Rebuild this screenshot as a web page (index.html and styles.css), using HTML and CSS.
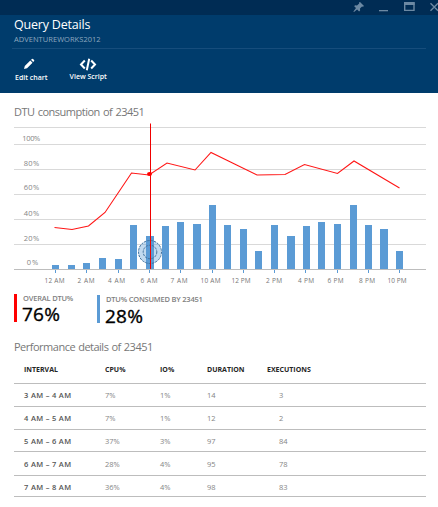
FILE: index.html
```html
<!DOCTYPE html>
<html lang="en">
<head>
<meta charset="utf-8">
<title>Query Details</title>
<link rel="stylesheet" href="styles.css">
</head>
<body>
<header class="blade-header">
  <div class="window-bar">
    <svg class="window-icons" width="88" height="15" viewBox="0 0 88 15">
      <path class="solid" d="M9 2l4 4-1 .8-1-.2-2 2 .1 2-1 .8-2-2L3 12l-.6-.5L5 8 3.2 6.200l.8-.9 2 .1 2.200-2-.2-.9z"/>
      <path class="solid" d="M28 10h9v1.300h-9z"/>
      <path class="stroke" d="M53.700 3v7.400h9.300V3z"/>
      <path class="solid" d="M53 2h10.600v3H53z"/>
      <path class="stroke" d="M79.500 3.300l7.500 7.400M87 3.300l-7.500 7.400"/>
    </svg>
  </div>
  <div class="heading">
    <h1>Query Details</h1>
    <p class="database">ADVENTUREWORKS2012</p>
  </div>
  <nav class="toolbar">
    <a class="tool edit">
      <svg width="12" height="12" viewBox="0 0 12 12"><path d="M1 11l.8-3L7.300 2.500l2.200 2.200L4 10.200zM8 1.800L9 .9q.5-.4 1 0l1.100 1.100q.4.500 0 1l-.9 1z"/></svg>
      <span>Edit chart</span>
    </a>
    <a class="tool script">
      <svg width="18" height="13" viewBox="0 0 18 13"><path class="code" d="M5.800 2.500L2 6.500l3.800 4M12.200 2.500l3.800 4-3.800 4M10.200.8L7.800 12.200"/></svg>
      <span>View Script</span>
    </a>
  </nav>
</header>
<main>
  <h2 class="chart-title">DTU consumption of 23451</h2>
  <svg class="chart" width="438" height="168" viewBox="0 121 438 168">
    <path class="grid" d="M14 127.500H426M14 144.500H426M14 169.500H426M14 194.500H426M14 219.500H426M14 244.500H426"/>
    <g class="axis-label">
      <text x="22.300" y="141" textLength="18">100%</text>
      <text x="23.700" y="166" textLength="15.500">80%</text>
      <text x="23.700" y="190" textLength="15.500">60%</text>
      <text x="23.700" y="216" textLength="15.500">40%</text>
      <text x="23.700" y="241" textLength="15.500">20%</text>
      <text x="26.700" y="265" textLength="11.500">0%</text>
    </g>
    <path class="bars" d="M52 265h7v4h-7zM68 265h7v4h-7zM83 263h7v6h-7zM99 258h7v11h-7zM115 259h7v10h-7zM130 225h7v44h-7zM146 236h8v33h-8zM162 226h7v43h-7zM177 222h7v47h-7zM193 224h8v45h-8zM209 205h7v64h-7zM224 225h7v44h-7zM240 229h7v40h-7zM255 251h7v18h-7zM271 225h7v44h-7zM287 236h8v33h-8zM303 226h7v43h-7zM318 222h7v47h-7zM334 224h7v45h-7zM350 205h7v64h-7zM365 225h7v44h-7zM380 229h8v40h-8zM396 251h7v18h-7z"/>
    <path class="axis" d="M14 269.500H426"/>
    <path class="ticks" d="M55.500 270v3M86.500 270v3M118.500 270v3M149.500 270v3M180.500 270v3M212.500 270v3M243.500 270v3M274.500 270v3M305.500 270v3M337.500 270v3M368.500 270v3M399.500 270v3"/>
    <circle class="halo" cx="150" cy="252" r="11.500"/>
    <circle class="ring" cx="150" cy="252" r="6.800"/>
    <path class="marker" d="M150.500 123.500V269"/>
    <path class="usage" d="M54.500 227.500L72 229.500 88.500 226 105 212.500 131.500 173 149 175 167 163 195 170 211 152.500 257 175 285 174.500 304.500 164.500 337.500 173.500 354 161 399.500 188"/>
    <ellipse class="dot" cx="149.500" cy="174" rx="2.500" ry="2"/>
    <g class="time-label">
      <text x="44.500" y="283" textLength="20">12 AM</text>
      <text x="77.500" y="283" textLength="17">2 AM</text>
      <text x="108" y="283" textLength="17">4 AM</text>
      <text x="140.500" y="283" textLength="17">6 AM</text>
      <text x="170.500" y="283" textLength="17">7 AM</text>
      <text x="200.500" y="283" textLength="20">10 AM</text>
      <text x="231.500" y="283" textLength="19">12 PM</text>
      <text x="266" y="283" textLength="16">2 PM</text>
      <text x="298" y="283" textLength="16">4 PM</text>
      <text x="327.500" y="283" textLength="16">6 PM</text>
      <text x="359" y="283" textLength="16">8 PM</text>
      <text x="387.500" y="283" textLength="19">10 PM</text>
    </g>
  </svg>
  <section class="stats">
    <div class="stat overall"><span class="label">OVERAL DTU%</span><strong>76%</strong></div>
    <div class="stat query"><span class="label">DTU% CONSUMED BY 23451</span><strong>28%</strong></div>
  </section>
  <h2 class="table-title">Performance details of 23451</h2>
  <div class="table">
    <div class="row head"><span>INTERVAL</span><span>CPU%</span><span>IO%</span><span>DURATION</span><span>EXECUTIONS</span></div>
    <div class="row"><b>3 AM – 4 AM</b><span>7%</span><span>1%</span><span>14</span><span class="count">3</span></div>
    <div class="row"><b>4 AM – 5 AM</b><span>7%</span><span>1%</span><span>12</span><span class="count">2</span></div>
    <div class="row short"><b>5 AM – 6 AM</b><span>37%</span><span>3%</span><span>97</span><span class="count">84</span></div>
    <div class="row tall"><b>6 AM – 7 AM</b><span>28%</span><span>4%</span><span>95</span><span class="count">78</span></div>
    <div class="row last"><b>7 AM – 8 AM</b><span>36%</span><span>4%</span><span>98</span><span class="count">83</span></div>
  </div>
</main>
</body>
</html>
```
FILE: styles.css
```css
* { box-sizing: border-box; }
body {
  margin: 0;
  width: 438px;
  height: 507px;
  overflow: hidden;
  background: #fff;
  font-family: "Open Sans", "Noto Sans", sans-serif;
}
h1, h2, p { margin: 0; font-weight: 400; white-space: nowrap; }
svg { display: block; }
.blade-header { height: 93px; background: #003c6c; color: #fff; }
.window-bar { height: 15px; background: #002c54; display: flex; justify-content: flex-end; }
.window-icons { margin-right: -1px; }
.window-icons .solid { fill: #6c89a3; }
.window-icons .stroke { fill: none; stroke: #6c89a3; stroke-width: 1.4; }
.heading { height: 34px; margin: 0 12px; padding: 1px 2px 0; border-bottom: 1px solid #164d7c; }
.heading h1 { font-size: 12.5px; line-height: 17px; letter-spacing: -.2px; }
.database { font-size: 7.5px; line-height: 12px; color: #8fa8bf; letter-spacing: .03px; }
.toolbar { display: flex; gap: 22px; padding: 8px 0 0 15px; }
.tool { display: flex; flex-direction: column; align-items: center; font-size: 7px; font-weight: 600; line-height: 10px; white-space: nowrap; }
.tool svg { fill: #fff; }
.tool.edit svg { margin: 1px 4px 3px 0; }
.tool.script svg { margin: 1px 0; }
.tool .code { fill: none; stroke: #fff; stroke-width: 2; }
.chart-title { height: 28px; padding: 10px 0 0 14px; font-size: 11px; line-height: 18px; letter-spacing: -.5px; word-spacing: .8px; color: #777; }
.chart { font-family: "Open Sans", sans-serif; }
.grid { stroke: #d9d9d9; }
.axis { stroke: #bdbdbd; }
.axis-label { font-size: 7.5px; fill: #858585; }
.time-label { font-size: 6.5px; fill: #777; }
.bars { fill: #5b9bd5; }
.ticks { stroke: #5b9bd5; }
.halo { fill: #5b9bd5; fill-opacity: .38; stroke: #41719c; stroke-dasharray: 2.4 1; }
.ring { fill: none; stroke: #41719c; stroke-dasharray: 2.4 1; }
.marker { stroke: #f00000; }
.usage { fill: none; stroke: #ff1616; stroke-width: 1.1; }
.dot { fill: #f00; }
.stats { display: flex; height: 49px; padding: 5px 0 0 14px; }
.stat { height: 28px; padding-left: 5px; border-left: 3px solid #f00; white-space: nowrap; }
.stat.overall { width: 83px; }
.stat.query { margin-top: 1px; border-color: #5b9bd5; }
.stat .label { display: block; font-size: 7.5px; font-weight: 600; line-height: 8px; letter-spacing: -.2px; color: #808080; padding-left: 1px; }
.stat.query .label { letter-spacing: -.21px; line-height: 9px; }
.stat strong { display: block; font-size: 19px; font-weight: 400; line-height: 24px; color: #000; letter-spacing: .2px; -webkit-text-stroke: .35px #000; }
.table-title { height: 20px; padding-left: 14px; font-size: 11px; line-height: 18px; letter-spacing: -.5px; word-spacing: .7px; color: #777; }
.table { margin: 0 12px 0 14px; padding-top: 1px; }
.row { display: grid; grid-template-columns: 81px 55px 47px 60px 1fr; height: 23px; padding: 5px 0 0 10px; border-bottom: 1px solid #bdbdbd; font-size: 7.5px; line-height: 12px; color: #858585; }
.row.head { height: 25px; font-size: 7px; font-weight: 700; color: #262626; }
.row b { font-weight: 600; color: #555; letter-spacing: .32px; }
.count { padding-left: 12px; }
.short { height: 22px; }
.tall { height: 24px; padding-top: 6px; }
.last { height: 21px; }
```
